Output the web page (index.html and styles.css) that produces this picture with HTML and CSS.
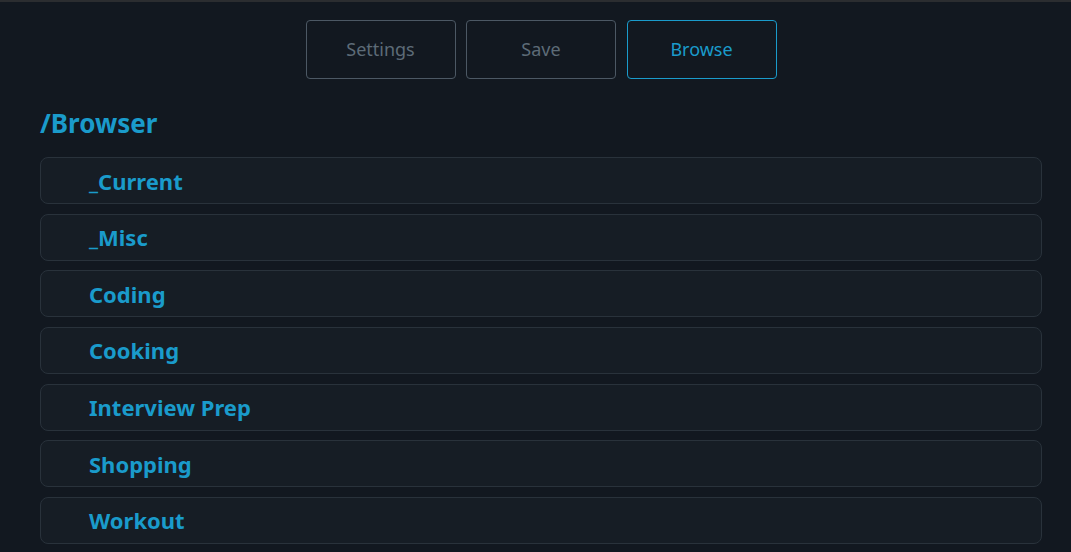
FILE: index.html
```html
<!DOCTYPE html>
<html>
<head>
<meta charset="utf-8">
<link rel="stylesheet" href="styles.css">
</head>
<body>
<div class="page">
  <nav class="tabs">
    <button class="tab">Settings</button>
    <button class="tab">Save</button>
    <button class="tab active">Browse</button>
  </nav>
  <h1 class="path">/Browser</h1>
  <ul class="list">
    <li class="item">_Current</li>
    <li class="item">_Misc</li>
    <li class="item">Coding</li>
    <li class="item">Cooking</li>
    <li class="item">Interview Prep</li>
    <li class="item">Shopping</li>
    <li class="item">Workout</li>
  </ul>
</div>
</body>
</html>
```
FILE: styles.css
```css
html, body {
  margin: 0;
  padding: 0;
  background: #121820;
  height: 100%;
  overflow: hidden;
}
body {
  font-family: "Noto Sans", "Open Sans", sans-serif;
  border-top: 2px solid #2b2d30;
  box-sizing: border-box;
}
.page {
  padding: 18px 29px 0 40px;
}
.tabs {
  display: flex;
  justify-content: center;
  gap: 10.5px;
}
.tab {
  width: 150px;
  height: 59px;
  background: transparent;
  border: 1px solid #4c5864;
  border-radius: 4px;
  color: #5d6b77;
  font-family: inherit;
  font-size: 18px;
  padding: 0 0 2px 0;
}
.tab.active {
  border-color: #1a9bcb;
  color: #1a9bcb;
}
.path {
  margin: 26px 0 0 0;
  font-size: 26px;
  line-height: 36px;
  font-weight: bold;
  color: #1a9bcb;
}
.list {
  list-style: none;
  margin: 16px 0 0 0;
  padding: 0;
  display: flex;
  flex-direction: column;
  gap: 9.67px;
}
.item {
  height: 45px;
  box-sizing: content-box;
  border: 1px solid #29323b;
  border-radius: 8px;
  background: #161d25;
  padding-left: 48px;
  padding-bottom: 0;
  display: flex;
  align-items: center;
  font-size: 22px;
  font-weight: bold;
  color: #1a9bcb;
}
```
